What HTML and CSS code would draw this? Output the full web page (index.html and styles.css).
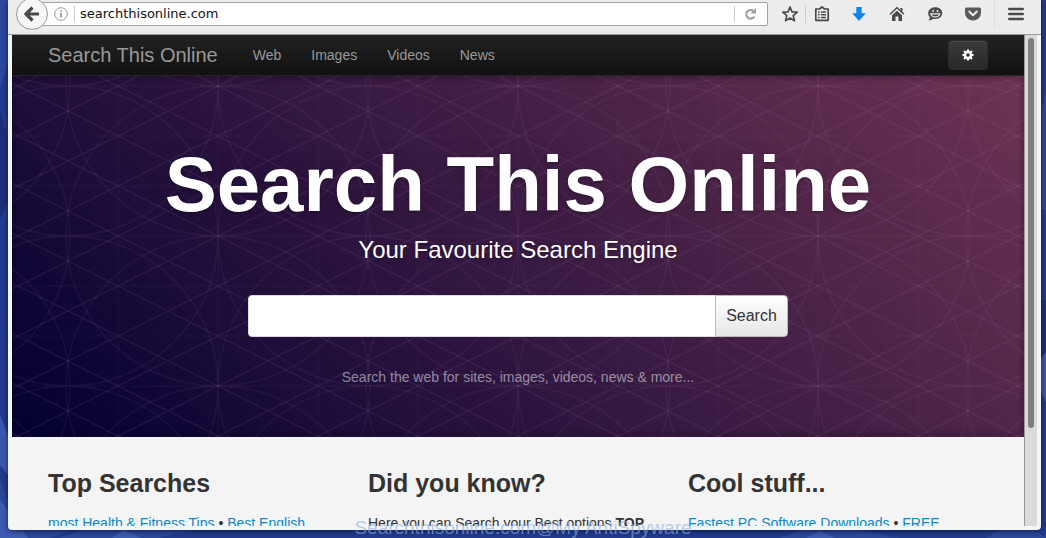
FILE: index.html
```html
<!DOCTYPE html>
<html lang="en">
<head>
<meta charset="utf-8">
<title>Search This Online</title>
<link rel="stylesheet" href="styles.css">
</head>
<body>
<svg class="wallpaper" viewBox="0 0 1046 538" preserveAspectRatio="none" aria-hidden="true">
  <path fill="#2c479f" d="M0 0h8v60L0 90zM1040 120l6-30v120h-6z"/>
  <path fill="#1c2f7c" d="M0 110l8 30v60l-8 20zM1040 300h6v90h-6z"/>
  <path fill="#3a57ae" d="M0 415l8 20v40l-8-10zM1040 360l6-8v50l-6-12z"/>
  <path fill="#2a4798" d="M0 478l10 30 60 24-20 6H0zM80 530h110l-30 8H60zM800 530h60l40 8H780zM1000 530l30-4 16 12h-60z"/>
  <path fill="#3b5ab0" d="M0 500l28 38H0zM112 538l12-8 18 8zM806 538l14-7 16 7z"/>
</svg>
<div class="window">
  <header class="toolbar">
    <button class="back" aria-label="Back">
      <svg viewBox="0 0 16 16" width="16" height="16"><path d="M8.5 1.500 2 8l6.500 6.500M2.500 8H15" fill="none" stroke="#4a4a4a" stroke-width="3.200"/></svg>
    </button>
    <div class="address">
      <svg class="info" viewBox="0 0 14 14" width="14" height="14" aria-hidden="true"><circle cx="7" cy="7" r="6.300" fill="none" stroke="#999"/><path d="M7 6v4.500M7 3.300v1.500" stroke="#888" stroke-width="1.500"/></svg>
      <input class="url" type="text" aria-label="Address" value="searchthisonline.com">
      <button class="reload" aria-label="Reload">
        <svg viewBox="0 0 14 14" width="14" height="14"><path d="M10.300 9.500A4.300 4.300 0 1 1 9.500 4.200" fill="none" stroke="#9aa0a2" stroke-width="2"/><path d="M12 1v5.500H6.500z" fill="#9aa0a2"/></svg>
      </button>
    </div>
    <button class="tool star" aria-label="Bookmark this page">
      <svg viewBox="0 0 18 18" width="18" height="18"><path d="M9 2l2 4.800 5.200.4-4 3.400 1.300 5.100L9 13l-4.500 2.700 1.300-5.100-4-3.400 5.200-.4z" fill="none" stroke="#4a4a4a" stroke-width="1.700" stroke-linejoin="round"/></svg>
    </button>
    <button class="tool list" aria-label="Bookmarks">
      <svg viewBox="0 0 16 16" width="16" height="16"><path d="M1.800 3h3.700L8 .8 10.500 3h3.700v11.300H1.800z" fill="none" stroke="#4a4a4a" stroke-width="1.700" stroke-linejoin="round"/><path d="M4 6h1.600M7 6h5M4 8.700h1.600M7 8.700h5M4 11.400h1.600M7 11.400h5" stroke="#4a4a4a" stroke-width="1.500"/></svg>
    </button>
    <button class="tool download" aria-label="Downloads">
      <svg viewBox="0 0 16 16" width="16" height="16"><path d="M5.300 1h5.400v6.300h4L8 15 1.300 7.300h4z" fill="#0a84f0"/></svg>
    </button>
    <button class="tool home" aria-label="Home">
      <svg viewBox="0 0 16 16" width="16" height="16"><path d="M1 8.300 8 1.800l7 6.500" fill="none" stroke="#4a4a4a" stroke-width="1.500"/><path d="M11.500 2h2v4l-2-2zM3 9.300l5-4.600 5 4.600v5.700H9.500v-4.500h-3V15H3z" fill="#4a4a4a"/></svg>
    </button>
    <button class="tool chat" aria-label="Start a conversation">
      <svg viewBox="0 0 16 16" width="16" height="16"><path d="M8.300 1.200c4 0 7 2.500 7 5.900s-3 5.900-7 5.900c-.8 0-1.600-.1-2.300-.3-.9.900-2.200 1.600-4.500 1.800.8-.8 1.300-1.800 1.500-3C1.700 10.400 1.200 8.800 1.200 7.100c0-3.400 3.100-5.900 7.100-5.900z" fill="#4a4a4a"/><path d="M3.800 7.800h9c-.6 2-2.300 3-4.500 3s-3.900-1-4.500-3z" fill="none" stroke="#ececec" stroke-width="1.200"/><circle cx="6" cy="5" r="1" fill="#ececec"/><circle cx="10.500" cy="5" r="1" fill="#ececec"/></svg>
    </button>
    <button class="tool pocket" aria-label="Save to Pocket">
      <svg viewBox="0 0 16 16" width="16" height="16"><path d="M1.500 1.500h13q1.500 0 1.500 1.500v4a8 7.500 0 0 1-16 0V3q0-1.500 1.500-1.500z" fill="#5a5a5a"/><path d="M4.200 5.500 8 9.200l3.800-3.700" fill="none" stroke="#ececec" stroke-width="2" stroke-linecap="round" stroke-linejoin="round"/></svg>
    </button>
    <button class="tool menu" aria-label="Open menu">
      <svg viewBox="0 0 16 16" width="16" height="16"><path d="M1.300 3h13.400M1.300 8h13.400M1.300 13h13.400" stroke="#4a4a4a" stroke-width="2.600" stroke-linecap="round"/></svg>
    </button>
  </header>
  <div class="viewport">
    <main class="page">
      <nav class="navbar">
        <div class="container nav-inner">
          <a class="brand" href="#">Search This Online</a>
          <a class="nav-link" href="#">Web</a>
          <a class="nav-link" href="#">Images</a>
          <a class="nav-link" href="#">Videos</a>
          <a class="nav-link" href="#">News</a>
          <button class="settings" aria-label="Settings">
            <svg viewBox="0 0 14 14" width="12" height="12"><circle cx="7" cy="7" r="3.600" fill="none" stroke="#fff" stroke-width="3"/><path d="M7 .5v2M7 11.500v2M.5 7h2M11.500 7h2M2.400 2.400l1.400 1.400M10.200 10.200l1.400 1.400M2.400 11.600l1.400-1.400M10.200 3.800l1.400-1.400" stroke="#fff" stroke-width="2.600"/></svg>
          </button>
        </div>
      </nav>
      <section class="hero">
        <svg class="lattice" aria-hidden="true">
          <defs>
            <pattern id="weave" x="206" y="10" width="300" height="150" patternUnits="userSpaceOnUse">
              <g fill="none" stroke="#c890c8">
                <path stroke-opacity=".05" d="M0 0v150M300 0v150M100 0v150M200 0v150M0 0h300M0 150h300M0 50h300M0 100h300"/>
                <path stroke-opacity=".1" stroke-width="1.300" d="M0-100l300 150M0-50l300 150M0 0l300 150M0 50l300 150M0 100l300 150M0 50l300-150M0 100l300-150M0 150l300-150M0 200l300-150M0 250l300-150"/>
                <g stroke-opacity=".07" stroke-width="1.300">
                  <ellipse cx="0" cy="0" rx="152" ry="150"/><ellipse cx="0" cy="150" rx="152" ry="150"/>
                  <ellipse cx="300" cy="0" rx="152" ry="150"/><ellipse cx="300" cy="150" rx="152" ry="150"/>
                  <circle cx="150" cy="0" r="150"/><circle cx="150" cy="150" r="150"/>
                </g>
              </g>
            </pattern>
          </defs>
          <rect width="100%" height="100%" fill="url(#weave)"/>
        </svg>
        <div class="hero-body">
          <h1>Search This Online</h1>
          <p class="tagline">Your Favourite Search Engine</p>
          <form class="search">
            <input class="query" type="text" aria-label="Search the web">
            <button class="submit" type="button">Search</button>
          </form>
          <p class="hint">Search the web for sites, images, videos, news &amp; more...</p>
        </div>
      </section>
      <section class="container columns">
        <article>
          <h2>Top Searches</h2>
          <p><a href="#">most Health &amp; Fitness Tips</a> • <a href="#">Best English</a></p>
        </article>
        <article>
          <h2>Did you know?</h2>
          <p>Here you can Search your Best options <strong>TOP</strong></p>
        </article>
        <article>
          <h2>Cool stuff...</h2>
          <p><a href="#">Fastest PC Software Downloads</a> • <a href="#">FREE</a></p>
        </article>
      </section>
    </main>
    <div class="scrollbar"><div class="thumb"></div></div>
  </div>
</div>
<div class="watermark">Searchthisonline.com@My AntiSpyware</div>
</body>
</html>
```
FILE: styles.css
```css
* { box-sizing: border-box; }

body {
  margin: 0;
  height: 100vh;
  padding: 0 5px 8px 8px;
  position: relative;
  overflow: hidden;
  background: #223a8c;
  font-family: "Liberation Sans", Arial, sans-serif;
  font-size: 14px;
  line-height: 20px;
  color: #333;
}

button, input { font-family: inherit; margin: 0; }
button { padding: 0; border: 0; background: none; display: flex; align-items: center; justify-content: center; }
a { text-decoration: none; color: #0a88cc; }
h1, h2, p { margin: 0; }

.wallpaper { position: absolute; inset: 0; width: 100%; height: 100%; }

.window {
  position: relative;
  height: 100%;
  display: flex;
  flex-direction: column;
  padding: 0 4px 4px;
  background: #f4f5f7;
  border-radius: 0 0 4px 4px;
  box-shadow: 0 1px 5px rgba(0, 0, 30, .6);
}

/* Browser toolbar */
.toolbar {
  flex: none;
  height: 35px;
  margin-left: -4px;
  margin-right: -4px;
  padding: 0 5px 7px 8px;
  display: flex;
  align-items: center;
  background: #ececec;
  border-bottom: 1px solid #999;
}
.back {
  position: relative;
  flex: none;
  width: 32px;
  height: 32px;
  border: 1px solid #999;
  border-radius: 50%;
  background: #f7f7f7;
}
.address {
  flex: 1;
  height: 24px;
  margin-left: -16px;
  padding-left: 21px;
  display: flex;
  align-items: center;
  background: #fff;
  border: 1px solid #a4a4a4;
  border-radius: 2px;
}
.info { flex: none; margin-right: 6px; }
.url {
  flex: 1;
  min-width: 0;
  height: 16px;
  padding: 0 0 0 5px;
  border: 0;
  border-left: 1px solid #ccc;
  background: none;
  font-family: "DejaVu Sans", sans-serif;
  font-size: 13px;
  color: #111;
}
.reload { width: 33px; height: 16px; border-left: 1px solid #ccc; }
.tool { flex: none; width: 38px; height: 28px; }
.star { width: 37px; padding-left: 7px; }
.list { width: 32px; height: 18px; border-left: 1px solid #ccc; }
.download { margin-left: 3px; }
.menu { width: 42px; margin-left: 2px; border-left: 1px solid #ddd; }

/* Page viewport */
.viewport { flex: 1; min-height: 0; display: flex; overflow: hidden; background: #f4f4f4; }
.page { flex: 1; min-width: 0; overflow: hidden; }
.container { max-width: 940px; margin: 0 auto; }
.scrollbar { flex: none; width: 13px; padding: 3px 3px 0 3px; background: #dadada; border-left: 1px solid #999; }
.thumb { width: 6px; height: 80%; border-radius: 3px; background: #7c7f80; }

.navbar { background: linear-gradient(#222, #111); border-bottom: 1px solid #252525; }
.nav-inner { height: 40px; display: flex; align-items: center; }
.brand { font-size: 20px; color: #999; margin-right: 20px; }
.nav-link { padding: 0 15px; color: #999; font-size: 14px; }
.settings {
  width: 40px;
  height: 30px;
  margin-left: auto;
  border: 1px solid #2b2b2b;
  border-radius: 4px;
  background: linear-gradient(#3b3b3b, #282828);
  box-shadow: inset 0 1px 0 #4a4a4a;
}

.hero {
  position: relative;
  padding: 68px 36px 50px;
  text-align: center;
  color: #fff;
  background: linear-gradient(45deg, #020031 0%, #6d3353 100%);
  box-shadow: inset 0 3px 7px rgba(0, 0, 0, .2), inset 0 -3px 7px rgba(0, 0, 0, .2);
}
.lattice { position: absolute; inset: 0; width: 100%; height: 100%; }
.hero-body { position: relative; }
h1 { font-size: 78px; line-height: 80px; text-shadow: 0 1px 3px rgba(0, 0, 0, .4), 0 0 30px rgba(0, 0, 0, .08); }
.tagline { margin-top: 10px; font-size: 24px; line-height: 32px; text-shadow: 0 1px 3px rgba(0, 0, 0, .4); }
.search { display: flex; width: 540px; max-width: 100%; margin: 29px auto 0; }
.query {
  flex: 1;
  min-width: 0;
  height: 42px;
  padding: 0 12px;
  border: 1px solid #ddd;
  border-radius: 4px 0 0 4px;
  background: #fff;
  font-size: 16px;
}
.submit {
  width: 73px;
  margin-left: -1px;
  border: 1px solid #bbb;
  border-radius: 0 4px 4px 0;
  background: linear-gradient(#fff, #e6e6e6);
  font-size: 16px;
  color: #333;
}
.hint { margin-top: 30px; color: rgba(255, 255, 255, .5); }

.columns { display: grid; grid-template-columns: repeat(3, 1fr); gap: 20px; padding-top: 26px; }
h2 { font-size: 25px; line-height: 40px; color: #333; }
.columns p { margin-top: 10px; white-space: nowrap; }

.watermark {
  position: absolute;
  left: 0;
  right: 0;
  bottom: 0;
  text-align: center;
  font-size: 19px;
  color: rgba(140, 175, 225, .6);
}
```
